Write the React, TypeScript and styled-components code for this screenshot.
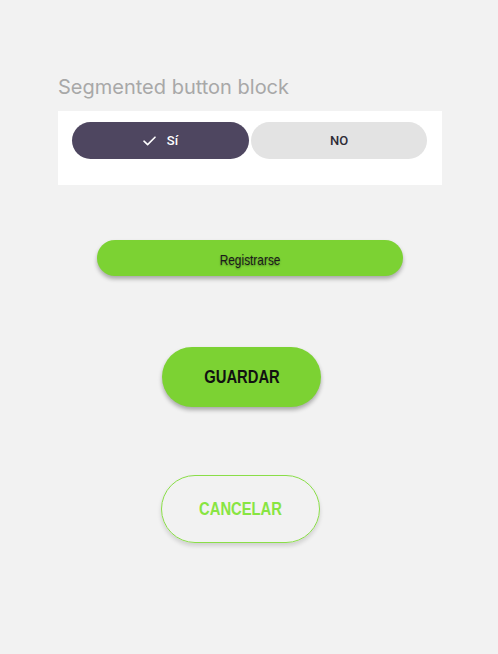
import React, { useState } from "react";
import styled, { createGlobalStyle } from "styled-components";

const GlobalStyle = createGlobalStyle`
  html, body { margin: 0; padding: 0; background: #f2f2f2; }
  body { font-family: Inter, "Noto Sans", sans-serif; }
`;

const Page = styled.div`
  width: 498px;
  min-height: 654px;
  box-sizing: border-box;
  padding: 75px 0 0 58px;
  display: flex;
  flex-direction: column;
  align-items: flex-start;
  background: #f2f2f2;
`;

const Title = styled.h2`
  margin: 0 0 12px;
  font-family: Inter, "Noto Sans", sans-serif;
  font-size: 20px;
  font-weight: 400;
  line-height: 24px;
  color: #a8a8a8;
`;

const Panel = styled.div`
  width: 384px;
  height: 74px;
  box-sizing: border-box;
  background: #ffffff;
  padding: 11px 15px 0 14px;
`;

const Segmented = styled.div`
  display: grid;
  grid-template-columns: 177px 176px;
  gap: 2px;
`;

const Segment = styled.button<{ $active: boolean }>`
  height: 37px;
  border: none;
  border-radius: 19px;
  display: flex;
  align-items: center;
  justify-content: center;
  gap: 11px;
  cursor: pointer;
  font-family: Roboto, "Noto Sans", sans-serif;
  font-size: 13px;
  font-weight: 500;
  background: ${(p) => (p.$active ? "#4e4660" : "#e3e3e3")};
  color: ${(p) => (p.$active ? "#ffffff" : "#2e2c36")};
  padding: 0;
`;

const Narrow = styled.span`
  display: inline-block;
  transform: scaleX(0.82);
  transform-origin: center;
`;

const Register = styled.button`
  margin: 55px 0 0 39px;
  width: 306px;
  height: 36px;
  border: none;
  border-radius: 18px;
  background: #7cd233;
  box-shadow: 0 3px 4px rgba(0, 0, 0, 0.3);
  font-family: "Liberation Sans", Arial, sans-serif;
  font-size: 14.5px;
  font-weight: 400;
  color: #1b1b1b;
  text-shadow: 0 1px 2px rgba(0, 0, 0, 0.35);
  padding-top: 4px;
  cursor: pointer;
`;

const Pill = styled.button<{ $outline?: boolean }>`
  width: 159px;
  height: ${(p) => (p.$outline ? "68px" : "60px")};
  border-radius: 34px;
  border: ${(p) => (p.$outline ? "1.5px solid #8ade48" : "none")};
  background: ${(p) => (p.$outline ? "transparent" : "#7cd233")};
  box-shadow: ${(p) =>
    p.$outline ? "0 3px 4px rgba(0, 0, 0, 0.14)" : "0 3px 4px rgba(0, 0, 0, 0.3)"};
  font-family: "Liberation Sans", Arial, sans-serif;
  font-size: 18px;
  font-weight: 700;
  color: ${(p) => (p.$outline ? "#88e542" : "#111111")};
  cursor: pointer;
  padding: 0;
`;

const SaveButton = styled(Pill)`
  margin: 71px 0 0 104px;
`;

const CancelButton = styled(Pill)`
  margin: 68px 0 0 103px;
`;

const Check = () => (
  <svg width="13" height="10" viewBox="0 0 13 10" fill="none">
    <path d="M1 5.2 L4.6 8.6 L12 1.2" stroke="#ffffff" strokeWidth="1.6" strokeLinecap="round" strokeLinejoin="round" />
  </svg>
);

export default function App() {
  const [yes, setYes] = useState(true);
  return (
    <>
      <GlobalStyle />
      <Page>
        <Title>Segmented button block</Title>
        <Panel>
          <Segmented>
            <Segment $active={yes} onClick={() => setYes(true)}>
              {yes && <Check />}
              <span>Sí</span>
            </Segment>
            <Segment $active={!yes} onClick={() => setYes(false)}>
              {!yes && <Check />}
              <span>NO</span>
            </Segment>
          </Segmented>
        </Panel>
        <Register>
          <Narrow>Registrarse</Narrow>
        </Register>
        <SaveButton>
          <Narrow>GUARDAR</Narrow>
        </SaveButton>
        <CancelButton $outline>
          <Narrow>CANCELAR</Narrow>
        </CancelButton>
      </Page>
    </>
  );
}
